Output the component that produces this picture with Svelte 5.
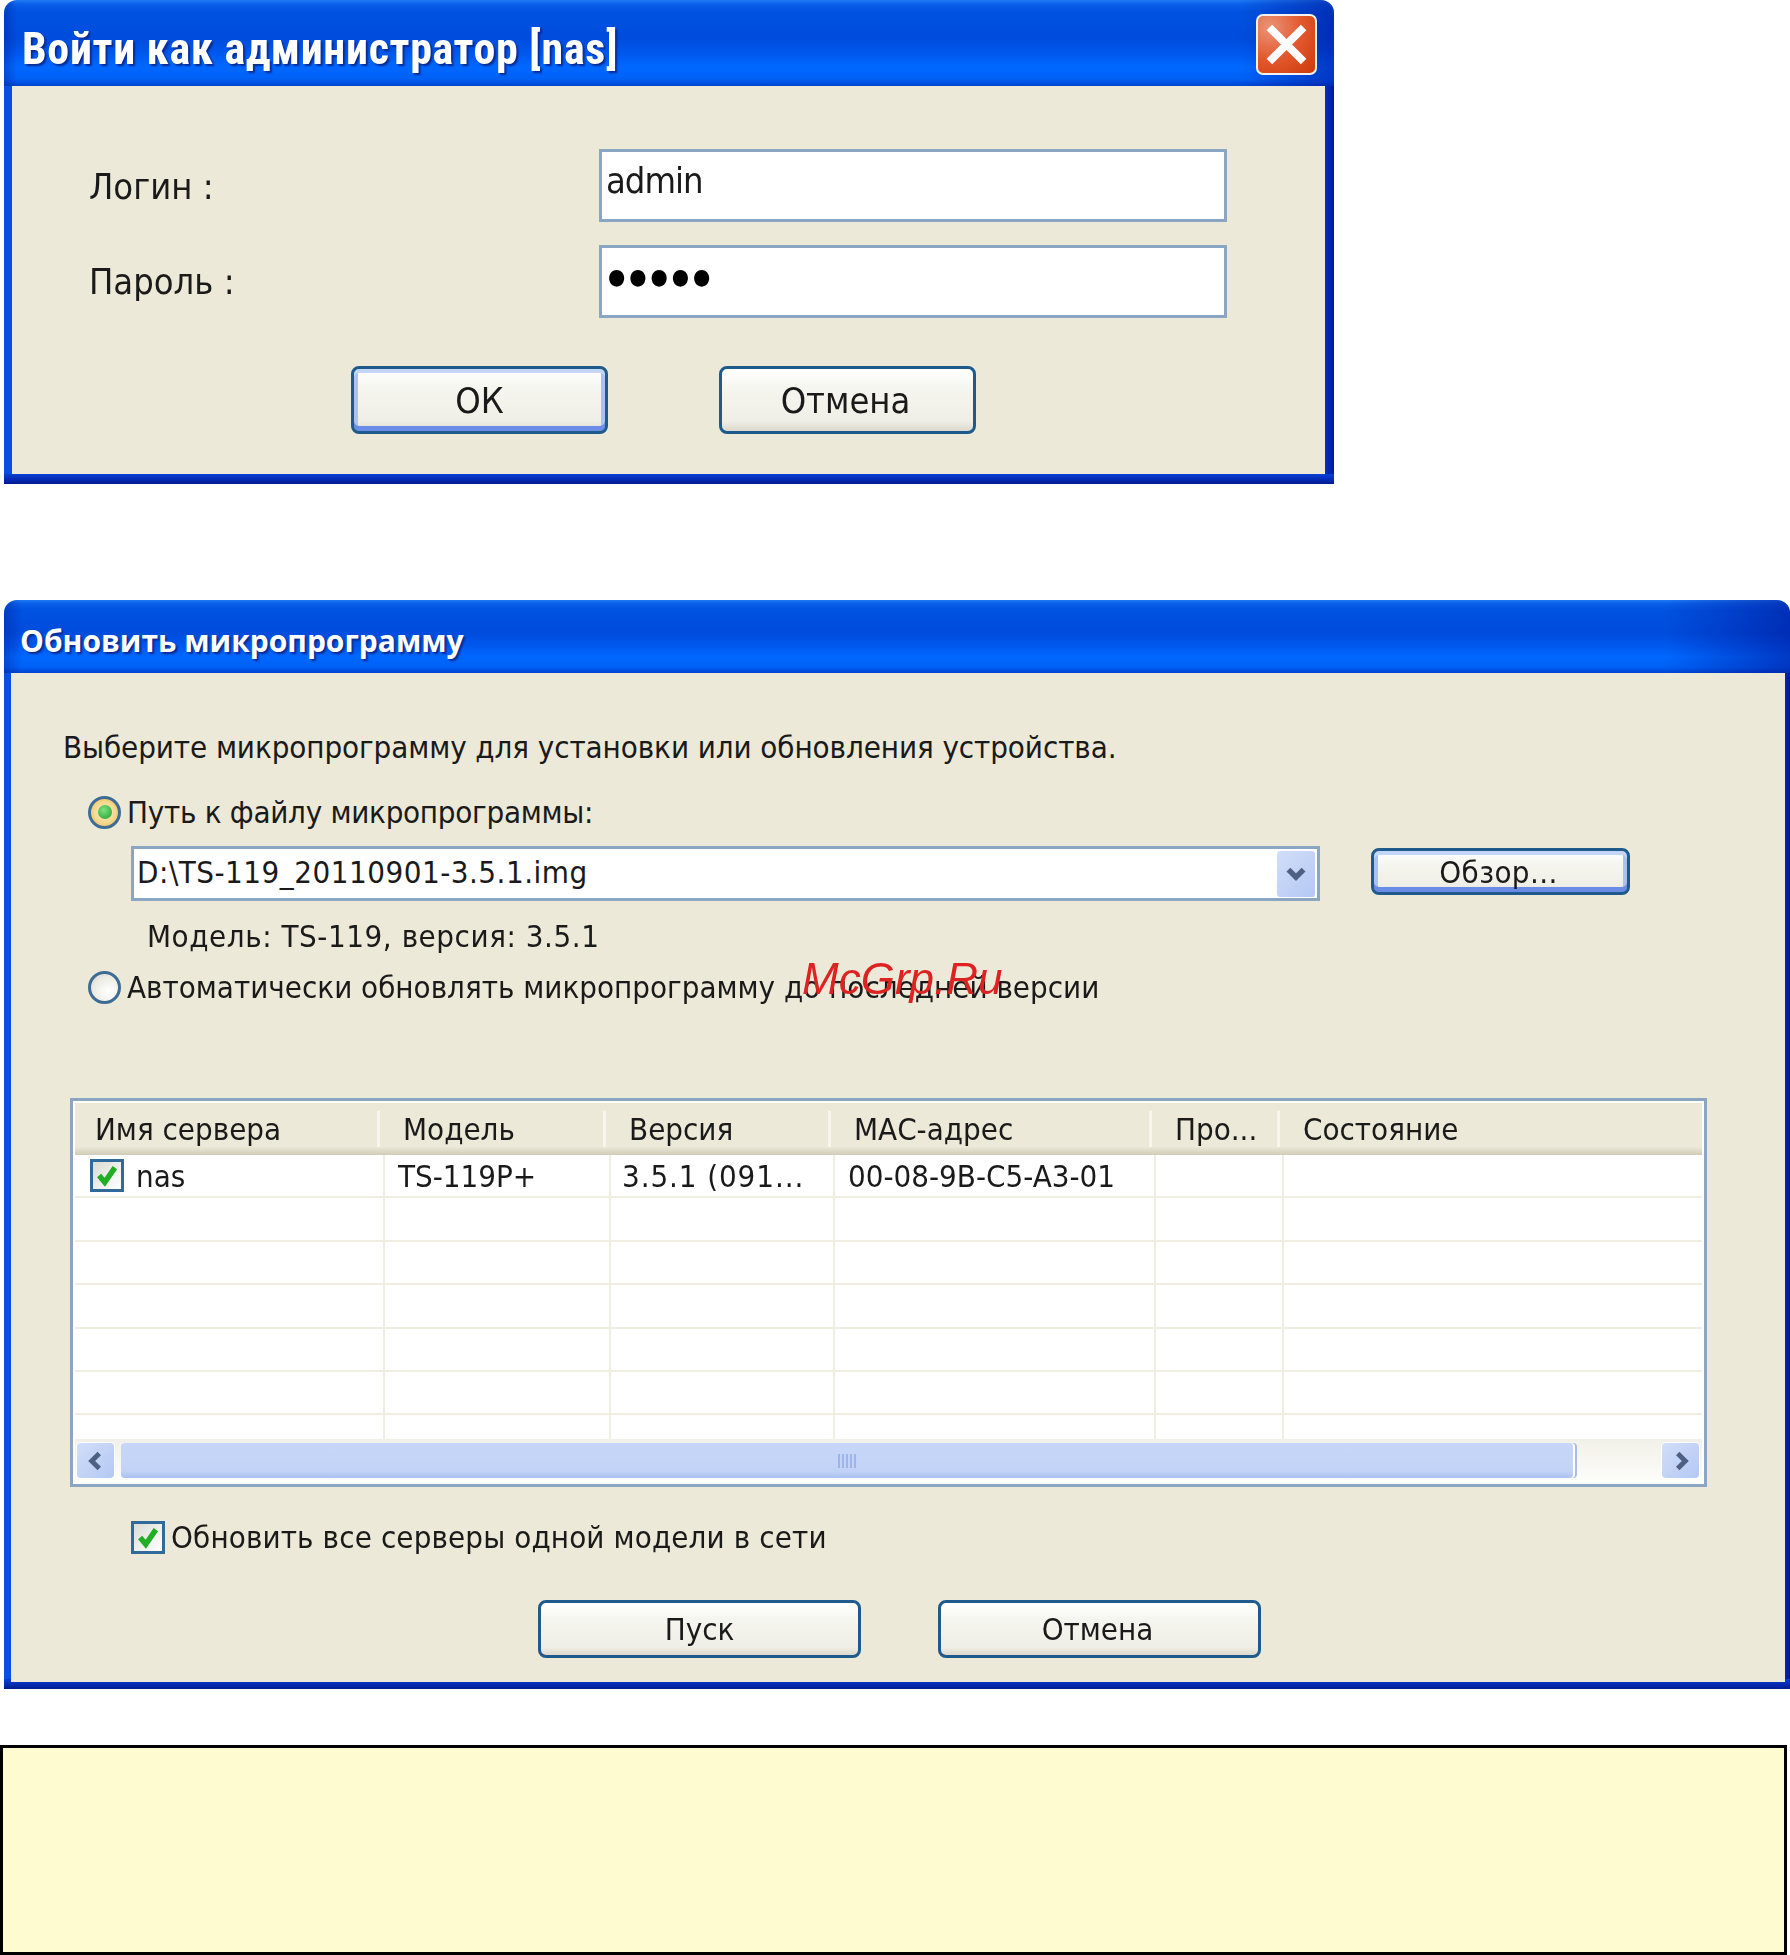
<script lang="ts">
  // Two XP-style dialogs from a NAS firmware manual page
  const headers = [
    { label: 'Имя сервера' },
    { label: 'Модель' },
    { label: 'Версия' },
    { label: 'МАС-адрес' },
    { label: 'Про...' },
    { label: 'Состояние' }
  ];
  const cells = ['nas', 'TS-119P+', '3.5.1 (091...', '00-08-9B-C5-A3-01', '', ''];
  const emptyRows = [1, 2, 3, 4, 5, 6];
</script>

{#snippet tick()}
  <svg viewBox="0 0 24 24" class="tick"><path d="M5 12 L10 18 L19 5" fill="none" stroke="#1fae24" stroke-width="4.8" /></svg>
{/snippet}

<div class="page">
  <section class="win login">
    <header class="titlebar">
      <span class="title">Войти как администратор [nas]</span>
      <button class="close" aria-label="Закрыть">
        <svg viewBox="0 0 40 40"><path d="M8 8 L32 32 M32 8 L8 32" stroke="#fff" stroke-width="5.5" /></svg>
      </button>
    </header>
    <div class="frame">
      <div class="client login-client">
        <div class="field">
          <span class="field-label">Логин :</span>
          <div class="input">admin</div>
        </div>
        <div class="field">
          <span class="field-label second">Пароль :</span>
          <div class="input dots">●●●●●</div>
        </div>
        <div class="login-buttons">
          <button class="btn default">ОК</button>
          <button class="btn shifted">Отмена</button>
        </div>
      </div>
    </div>
  </section>

  <section class="win update">
    <header class="titlebar small">
      <span class="title">Обновить микропрограмму</span>
    </header>
    <div class="frame">
      <div class="client update-client">
        <p class="intro">Выберите микропрограмму для установки или обновления устройства.</p>
        <div class="radio-row first">
          <span class="radio on"><i></i></span>
          <span class="path-label">Путь к файлу микропрограммы:</span>
        </div>
        <div class="path-row">
          <div class="combo">
            <span class="path-value">D:\TS-119_20110901-3.5.1.img</span>
            <span class="drop">
              <svg viewBox="0 0 24 24"><path d="M5 8 L12 15 L19 8" fill="none" stroke="#4d6185" stroke-width="5" /></svg>
            </span>
          </div>
          <button class="btn default browse">Обзор...</button>
        </div>
        <p class="model">Модель: TS-119, версия: 3.5.1</p>
        <div class="radio-row">
          <span class="radio"></span>
          <span>Автоматически обновлять микропрограмму до последней версии</span>
        </div>

        <div class="list">
          <div class="list-head">
            {#each headers as h}
              <span class="head-cell">{h.label}</span>
            {/each}
          </div>
          <div class="list-body">
            <div class="list-row">
              {#each cells as c, i}
                <span class="cell" class:spaced={i === 2}>
                  {#if i === 0}<span class="check inrow">{@render tick()}</span>{/if}
                  {c}
                </span>
              {/each}
            </div>
            {#each emptyRows as r (r)}
              <div class="list-row">
                {#each cells as _}<span class="cell"></span>{/each}
              </div>
            {/each}
          </div>
          <div class="scrollbar">
            <span class="sb-btn">
              <svg viewBox="0 0 24 24"><path d="M15 5 L8 12 L15 19" fill="none" stroke="#4d6185" stroke-width="4.5" /></svg>
            </span>
            <span class="thumb"><i></i><i></i><i></i><i></i><i></i></span>
            <span class="sb-btn right">
              <svg viewBox="0 0 24 24"><path d="M9 5 L16 12 L9 19" fill="none" stroke="#4d6185" stroke-width="4.5" /></svg>
            </span>
          </div>
        </div>

        <div class="all-row">
          <span class="check">{@render tick()}</span>
          <span class="all-label">Обновить все серверы одной модели в сети</span>
        </div>
        <div class="update-buttons">
          <button class="btn">Пуск</button>
          <button class="btn shifted">Отмена</button>
        </div>
      </div>
    </div>
  </section>

  <div class="note"></div>
  <span class="watermark">McGrp.Ru</span>
</div>

<style>
  :global(body) {
    margin: 0;
    background: #fff;
  }
  .page {
    position: relative;
    width: 1790px;
    height: 1955px;
    overflow: hidden;
    font-family: "DejaVu Sans", sans-serif;
    font-stretch: condensed;
    color: #1a1a1a;
  }
  button {
    font: inherit;
    color: inherit;
    padding: 0;
  }
  p {
    margin: 0;
  }

  .win {
    display: flex;
    flex-direction: column;
    margin-left: 4px;
    border-radius: 13px 13px 0 0;
    overflow: hidden;
    filter: blur(0.6px);
  }
  .login {
    width: 1330px;
    height: 484px;
  }
  .update {
    width: 1786px;
    height: 1089px;
    margin-top: 116px;
  }

  .titlebar {
    height: 86px;
    flex: none;
    display: flex;
    align-items: center;
    justify-content: space-between;
    padding: 0 17px 0 18px;
    box-sizing: border-box;
    background:
      linear-gradient(90deg, rgba(0, 20, 140, 0.35), transparent 1%, transparent 93%, rgba(0, 20, 150, 0.55)),
      linear-gradient(180deg, #1d7af5 0, #0a5fe8 5%, #0052e0 14%, #004cdc 45%, #0058ee 62%, #0068ff 78%, #0060f5 92%, #0044d0 100%);
  }
  .titlebar.small {
    height: 73px;
    padding-left: 16px;
  }
  .title {
    color: #fff;
    font-family: Roboto, sans-serif;
    font-weight: 700;
    font-size: 44px;
    letter-spacing: 0.65px;
    padding-top: 12px;
    text-shadow: 2px 2px 2px #0a2a90;
  }
  .small .title {
    font-family: "Open Sans", sans-serif;
    font-stretch: normal;
    font-size: 30px;
    letter-spacing: 0;
    padding-top: 8px;
  }
  .close {
    width: 61px;
    height: 61px;
    margin-top: 2px;
    border: 2px solid #f2f2f2;
    border-radius: 7px;
    background: radial-gradient(circle at 20% 20%, #ea9478 0, #e2582e 50%, #cc3a08 100%);
    display: flex;
  }
  .close svg {
    width: 100%;
    height: 100%;
  }

  .frame {
    flex: 1;
    display: flex;
    padding: 0 9px 10px 8px;
    background:
      linear-gradient(180deg, transparent calc(100% - 10px), #0a3fd8 calc(100% - 10px), #001a90 100%),
      linear-gradient(90deg, #0a4fe2 0 8px, #0030c0 calc(100% - 9px), #00189a 100%);
  }
  .update .frame {
    padding: 0 5px 7px 7px;
  }
  .client {
    flex: 1;
    background: #ece9d8;
    font-size: 33px;
    box-sizing: border-box;
  }

  .login-client {
    padding: 63px 0 0 77px;
    font-size: 36px;
  }
  .field {
    display: flex;
    align-items: center;
    height: 73px;
    margin-bottom: 23px;
  }
  .field-label {
    width: 510px;
    padding-top: 2px;
  }
  .field-label.second {
    padding-top: 0;
  }
  .input {
    width: 628px;
    height: 73px;
    box-sizing: border-box;
    border: 3px solid #8aa6c2;
    background: #fff;
    padding: 9px 0 0 4px;
    line-height: 40px;
    letter-spacing: -1px;
  }
  .dots {
    font-size: 22px;
    letter-spacing: 4px;
    padding: 9px 0 0 6px;
    color: #000;
  }
  .login-buttons {
    display: flex;
    gap: 111px;
    margin: 48px 0 0 262px;
  }
  .login-buttons .btn {
    width: 257px;
    height: 68px;
  }

  .btn {
    box-sizing: border-box;
    border: 3px solid #1f5a8c;
    border-radius: 8px;
    background: linear-gradient(180deg, #fff 0, #f6f6f0 30%, #efeee6 85%, #dcd8cc 100%);
  }
  .btn.shifted {
    padding-right: 4px;
  }
  .btn.default {
    box-shadow: inset 0 4px 0 #c4d6f8, inset 0 -5px 0 #6a8ce6, inset 4px 0 0 #a9c2f2, inset -4px 0 0 #a9c2f2;
  }

  .update-client {
    padding: 54px 0 0 52px;
    font-size: 31px;
  }
  .intro {
    line-height: 40px;
    letter-spacing: -0.08px;
  }
  .radio-row {
    display: flex;
    align-items: center;
    gap: 6px;
    height: 40px;
    margin: 11px 0 0 25px;
  }
  .radio-row.first {
    margin-top: 25px;
  }
  .path-label {
    letter-spacing: -0.27px;
  }
  .radio {
    width: 33px;
    height: 33px;
    box-sizing: border-box;
    flex: none;
    border-radius: 50%;
    border: 3px solid #3d6c94;
    background: radial-gradient(circle at 65% 65%, #fff 0, #ececE4 60%, #cfcfc8 100%);
    display: flex;
    align-items: center;
    justify-content: center;
  }
  .radio.on {
    background: radial-gradient(circle, #f6ecd0 0, #f4d98e 55%, #eeac3e 100%);
  }
  .radio i {
    width: 14px;
    height: 14px;
    border-radius: 50%;
    background: radial-gradient(circle at 40% 35%, #7fe07f, #1f9e2e);
  }
  .path-row {
    display: flex;
    align-items: flex-start;
    gap: 51px;
    margin: 14px 0 0 68px;
  }
  .combo {
    width: 1189px;
    height: 55px;
    box-sizing: border-box;
    flex: none;
    border: 3px solid #8aa6c2;
    background: #fff;
    display: flex;
    align-items: center;
    justify-content: space-between;
    padding: 0 2px 0 3px;
  }
  .path-value {
    letter-spacing: 0.5px;
    margin-top: -4px;
  }
  .drop {
    width: 38px;
    height: 46px;
    border-radius: 3px;
    background: linear-gradient(135deg, #d2def9, #b4c8f3);
    display: flex;
    align-items: center;
    justify-content: center;
  }
  .drop svg {
    width: 26px;
    height: 26px;
  }
  .browse {
    width: 259px;
    height: 47px;
    margin-top: 2px;
    padding-right: 4px;
    letter-spacing: 0.4px;
  }
  .model {
    line-height: 40px;
    margin: 15px 0 0 84px;
    letter-spacing: 0.55px;
  }

  .list {
    width: 1637px;
    height: 389px;
    box-sizing: border-box;
    margin: 91px 0 0 7px;
    border: 3px solid #8aa6c2;
    padding: 2px;
    background: #fff;
    display: flex;
    flex-direction: column;
  }
  .list-head,
  .list-row {
    display: grid;
    flex: none;
  }
  .list-head {
    height: 52px;
    box-sizing: border-box;
    grid-template-columns: 302px 226px 225px 321px 128px 1fr;
    background: linear-gradient(180deg, #ece9d8 0 84%, #d0ccb8 100%);
    align-items: center;
  }
  .head-cell {
    padding-left: 23px;
    height: 36px;
    line-height: 36px;
    border-left: 3px solid #f6f5ee;
    box-sizing: border-box;
  }
  .head-cell:first-child {
    border-left: 0;
    padding-left: 20px;
  }
  .list-body {
    height: 284px;
    overflow: hidden;
  }
  .list-row {
    height: 43.4px;
    box-sizing: border-box;
    border-bottom: 2px solid #f0eee0;
    grid-template-columns: 308px 226px 224px 321px 128px 1fr;
  }
  .cell {
    display: flex;
    align-items: center;
    gap: 12px;
    padding-left: 13px;
    border-left: 2px solid #f0eee0;
    box-sizing: border-box;
    white-space: nowrap;
    min-width: 0;
  }
  .cell:first-child {
    border-left: 0;
    padding-left: 15px;
  }
  .cell.spaced {
    letter-spacing: 0.9px;
    padding-left: 11px;
  }
  .check {
    width: 34px;
    height: 33px;
    box-sizing: border-box;
    flex: none;
    display: block;
    border: 3px solid #2f6a9a;
    background: linear-gradient(135deg, #dcdcd4, #fff);
  }
  .tick {
    display: block;
    width: 100%;
    height: 100%;
  }

  .scrollbar {
    height: 43px;
    margin-top: auto;
    display: flex;
    align-items: center;
    padding: 0 3px 0 2px;
    background: linear-gradient(180deg, #f1f0e8, #fdfdfa);
  }
  .sb-btn {
    width: 37px;
    height: 35px;
    flex: none;
    border-radius: 4px;
    background: linear-gradient(135deg, #d2def9, #b4c8f3);
    box-shadow: 0 0 0 1px #fff;
    display: flex;
    align-items: center;
    justify-content: center;
  }
  .sb-btn.right {
    margin-left: auto;
  }
  .sb-btn svg {
    width: 26px;
    height: 26px;
  }
  .thumb {
    margin-left: 7px;
    width: 1452px;
    height: 35px;
    border-radius: 4px;
    background: linear-gradient(180deg, #c7d6f8 0, #c3d3f7 80%, #a9c1f2 100%);
    box-shadow: 2px 0 0 #fff, 4px 0 0 #a5bde8;
    display: flex;
    align-items: center;
    justify-content: center;
    gap: 2px;
  }
  .thumb i {
    width: 2px;
    height: 14px;
    background: #9db4e6;
  }

  .all-row {
    display: flex;
    align-items: center;
    gap: 6px;
    height: 40px;
    margin: 30px 0 0 68px;
  }
  .all-label {
    letter-spacing: 0.12px;
  }
  .update-buttons {
    display: flex;
    gap: 77px;
    margin: 43px 0 0 475px;
  }
  .update-buttons .btn {
    width: 323px;
    height: 58px;
  }

  .watermark {
    position: absolute;
    left: 802px;
    top: 954px;
    font-family: "Liberation Sans", sans-serif;
    font-stretch: normal;
    font-style: italic;
    font-size: 44px;
    color: #dd2222;
  }

  .note {
    width: 1787px;
    height: 210px;
    margin-top: 56px;
    box-sizing: border-box;
    border: 3px solid #000;
    background: #fefbd0;
  }
</style>
